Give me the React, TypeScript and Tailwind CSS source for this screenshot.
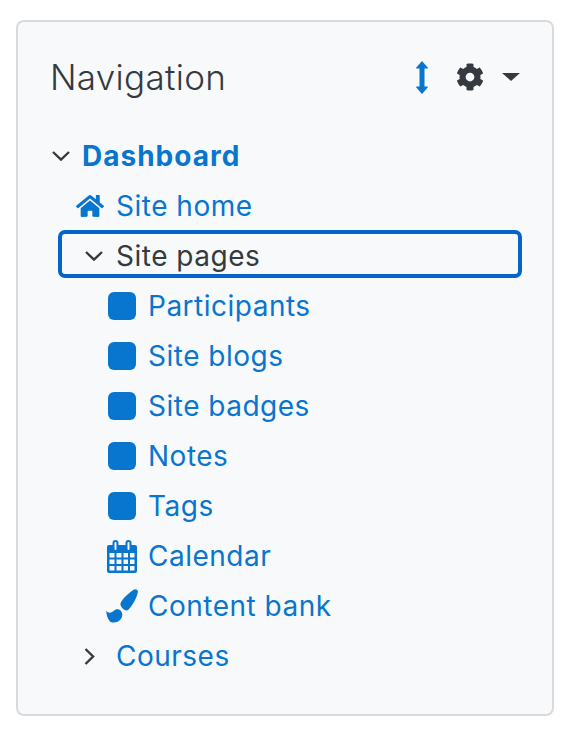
import { FaCog, FaHome } from "react-icons/fa";
import type { ReactNode } from "react";

const squares = ["Participants", "Site blogs", "Site badges", "Notes", "Tags"];

function Square() {
  return <span className="-mt-px block h-7 w-7 rounded-[6px] bg-[#0875cf]" />;
}

function ChevronDown() {
  return (
    <svg viewBox="0 0 18 10" className="h-[10px] w-[18px] text-[#343a40]" fill="none" stroke="currentColor" strokeWidth="2.4">
      <path d="M1 1l8 7.600 8-7.600" />
    </svg>
  );
}

function ChevronRight() {
  return (
    <svg viewBox="0 0 11 17" className="h-[17px] w-[11px] text-[#343a40]" fill="none" stroke="currentColor" strokeWidth="2.4">
      <path d="M1.500 1l7.600 7.500-7.600 7.500" />
    </svg>
  );
}

function CalendarIcon() {
  return (
    <svg viewBox="0 0 30 33" className="h-[33px] w-[30px] text-[#0875cf]" fill="currentColor">
      <path
        fillRule="evenodd"
        d="M2 5h3.500v-2a3 3 0 0 1 6 0v2h7v-2a3 3 0 0 1 6 0v2H28a2 2 0 0 1 2 2v24a2 2 0 0 1-2 2H2a2 2 0 0 1-2-2V7a2 2 0 0 1 2-2zM7.500 3v6a1 1 0 0 0 2 0V3a1 1 0 0 0-2 0zm13 0v6a1 1 0 0 0 2 0V3a1 1 0 0 0-2 0zM2.500 13v4.500h5V13zm7 0v4.500h5V13zm7 0v4.500h4.500V13zm6.500 0v4.500h4.500V13zM2.500 19.500V24h5v-4.500zm7 0V24h5v-4.500zm7 0V24h4.500v-4.500zm6.500 0V24h4.500v-4.500zM2.500 26v4.500h5V26zm7 0v4.500h5V26zm7 0v4.500h4.500V26zm6.500 0v4.500h4.500V26z"
      />
    </svg>
  );
}

function BrushIcon() {
  return (
    <svg viewBox="0 0 32 34" className="h-[34px] w-8 text-[#0875cf]" fill="currentColor">
      <path d="M27.500.8C30-.8 32.500.8 31.800 3.500 30 11 26 17 22 21c-2 2-8-2.500-7.500-6.500C16 10 22.500 4.500 27.500.8z" />
      <path d="M.2 22c3 3 6 1.500 8-.5 2-2 5.300-1.500 6.800.5 2.200 3 1.500 6.500-1 9-3 3-8 3-10 1.500C1.500 30 .5 26 .2 22z" />
    </svg>
  );
}

function Leaf({ icon, label }: { icon: ReactNode; label: string }) {
  return (
    <li className="flex h-[50px] items-center pl-[58px]">
      <span className="flex w-[40px] shrink-0 items-center">{icon}</span>
      <a className="text-[#0875cf]">{label}</a>
    </li>
  );
}

export default function App() {
  return (
    <div className="h-[744px] w-[572px] bg-white pl-4 pt-5 font-['Inter',sans-serif] text-[28px] leading-[50px] tracking-[0.5px]">
      <section className="h-[696px] w-[538px] rounded-[8px] border-2 border-[#d9dadb] bg-[#f8f9fa] px-8 pt-[30px]">
        <header className="flex h-[50px] items-center justify-between">
          <h2 className="text-[35px] font-light leading-[50px] tracking-[0.3px] text-[#343a40]">Navigation</h2>
          <div className="flex items-center">
            <svg viewBox="0 0 12 33" className="h-[33px] w-3 text-[#0875cf]" fill="currentColor">
              <path d="M6 0l5.700 6.500c.4.500.1 1-.5 1H8.500v18h2.700c.6 0 .9.500.5 1L6 33 .3 26.500c-.4-.5-.1-1 .5-1h2.700v-18H.8c-.6 0-.9-.5-.5-1z" />
            </svg>
            <FaCog className="ml-[28px] h-7 w-7 text-[#343a40]" />
            <span className="ml-[18px] block h-0 w-0 border-x-[9px] border-t-[8px] border-x-transparent border-t-[#343a40]" />
          </div>
        </header>
        <ul className="mt-[29px]">
          <li className="flex h-[50px] items-center pl-[2px]">
            <span className="flex w-[30px] shrink-0 items-center">
              <ChevronDown />
            </span>
            <a className="font-bold tracking-[1px] text-[#0875cf]">Dashboard</a>
          </li>
          <li className="flex h-[50px] items-center pl-[26px]">
            <span className="flex w-[40px] shrink-0 items-center">
              <FaHome className="h-7 w-7 text-[#0875cf]" />
            </span>
            <a className="text-[#0875cf]">Site home</a>
          </li>
          <li className="-mr-[2px] -mt-px mb-[3px] ml-2 flex h-[48px] items-center rounded-[7px] border-4 border-[#0564c8] pl-[23px] pt-1">
            <span className="flex w-[31px] shrink-0 items-center">
              <ChevronDown />
            </span>
            <span className="text-[#343a40]">Site pages</span>
          </li>
          {squares.map((label) => (
            <Leaf key={label} icon={<Square />} label={label} />
          ))}
          <Leaf icon={<span className="-ml-px"><CalendarIcon /></span>} label="Calendar" />
          <Leaf icon={<span className="-ml-[2px]"><BrushIcon /></span>} label="Content bank" />
          <li className="flex h-[50px] items-center pl-[34px]">
            <span className="flex w-[32px] shrink-0 items-center">
              <ChevronRight />
            </span>
            <a className="text-[#0875cf]">Courses</a>
          </li>
        </ul>
      </section>
    </div>
  );
}
